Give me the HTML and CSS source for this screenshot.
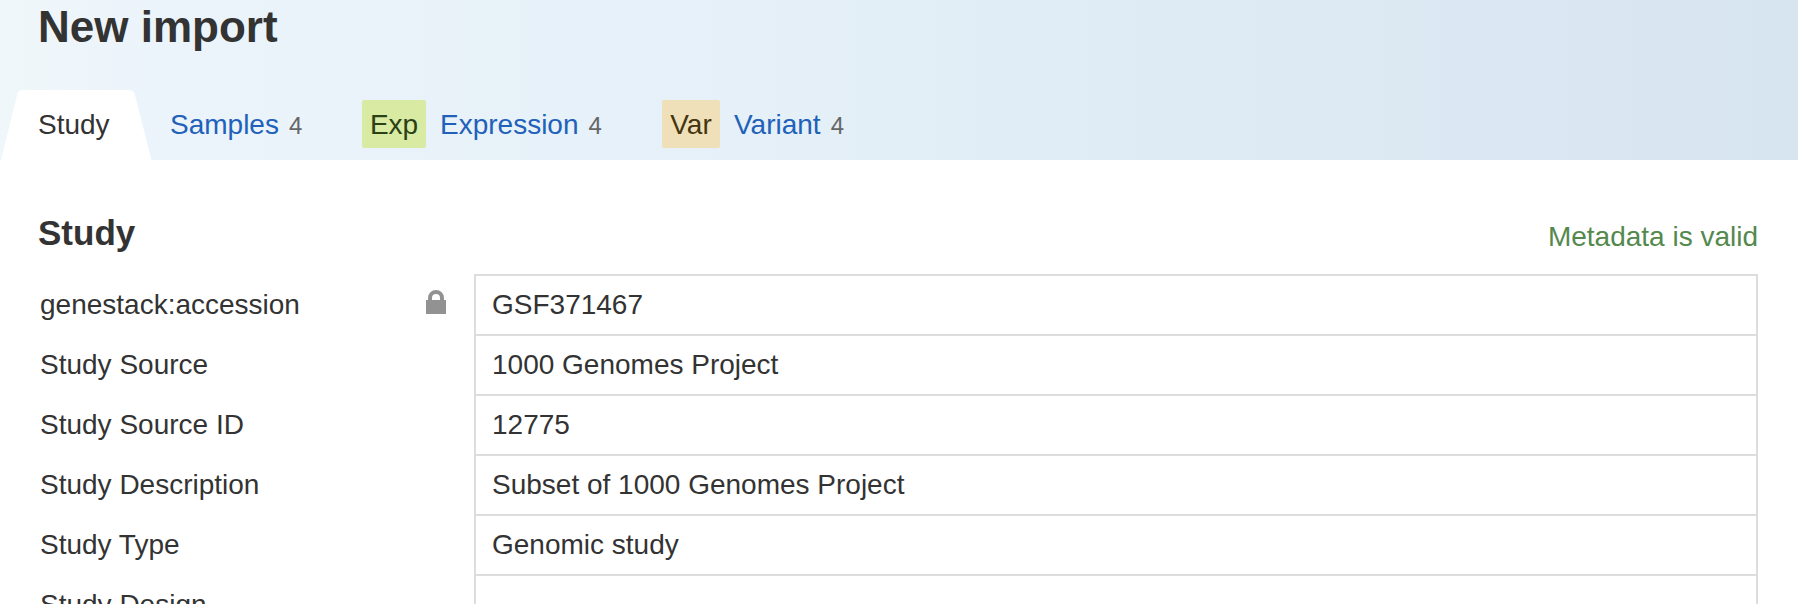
FILE: index.html
```
<!DOCTYPE html>
<html lang="en">
<head>
<meta charset="utf-8">
<title>New import</title>
<link rel="stylesheet" href="styles.css">
</head>
<body>
<header class="header">
  <h1 class="title">New import</h1>
  <nav class="tabs">
    <a class="tab tab-active">
      <svg class="tab-shape" width="153" height="70" viewBox="0 0 153 70"><path d="M1 70L17.300 4Q18.500 0 23 0H129Q133.500 0 134.700 4L151.500 70Z" fill="#fff"/></svg>
      <span class="tab-label">Study</span>
    </a>
    <a class="tab tab-samples"><span class="link">Samples</span><span class="count">4</span></a>
    <a class="tab tab-expression"><span class="badge badge-exp">Exp</span><span class="link">Expression</span><span class="count">4</span></a>
    <a class="tab"><span class="badge badge-var">Var</span><span class="link">Variant</span><span class="count">4</span></a>
  </nav>
</header>
<main class="content">
  <div class="heading">
    <h2 class="subtitle">Study</h2>
    <span class="status">Metadata is valid</span>
  </div>
  <div class="form">
    <div class="row">
      <div class="label"><span>genestack:accession</span>
        <svg class="lock" width="20" height="24" viewBox="0 0 20 24"><path d="M4 11V8a6 6 0 0 1 12 0v3" fill="none" stroke="#929292" stroke-width="4"/><path d="M0 10H20V24H0Z" fill="#929292"/></svg>
      </div>
      <div class="value">GSF371467</div>
    </div>
    <div class="row"><div class="label">Study Source</div><div class="value">1000 Genomes Project</div></div>
    <div class="row"><div class="label">Study Source ID</div><div class="value">12775</div></div>
    <div class="row"><div class="label">Study Description</div><div class="value">Subset of 1000 Genomes Project</div></div>
    <div class="row"><div class="label">Study Type</div><div class="value">Genomic study</div></div>
    <div class="row"><div class="label">Study Design</div><div class="value"></div></div>
  </div>
</main>
</body>
</html>
```
FILE: styles.css
```
* { box-sizing: border-box; }
body {
  margin: 0;
  height: 604px;
  overflow: hidden;
  background: #fff;
  color: #333;
  font: 28px/32px "Liberation Sans", Arial, sans-serif;
}
.header {
  display: flex;
  flex-direction: column;
  justify-content: space-between;
  height: 160px;
  background: linear-gradient(90deg, #eff7fa 0, #ecf4fb 150px, #e5f0f8 760px, #deebf4 1200px, #d7e5f1 100%);
}
.title {
  margin: 0;
  padding: 1px 0 0 38px;
  font-size: 44px;
  line-height: 52px;
}
.tabs { display: flex; height: 70px; }
.tab { display: flex; align-items: center; white-space: nowrap; }
.tab-active { position: relative; width: 152px; padding-left: 38px; }
.tab-shape { position: absolute; left: 0; top: 0; }
.tab-label { position: relative; }
.tab-samples { width: 210px; padding-left: 18px; }
.tab-expression { width: 300px; }
.link { color: #2161b9; }
.count { margin-left: 10px; padding-top: 2px; color: #666; font-size: 24px; }
.badge {
  display: flex;
  align-items: center;
  justify-content: center;
  height: 48px;
  margin: -2px 14px 0 0;
  padding-top: 2px;
  border-radius: 2px;
}
.badge-exp { width: 64px; background: #d9eaa2; color: #2a4015; }
.badge-var { width: 58px; background: #f0e0b9; color: #44350f; }
.content { padding: 0 40px; }
.heading {
  display: flex;
  justify-content: space-between;
  height: 114px;
  margin-left: -2px;
}
.subtitle { margin: 0; padding-top: 53px; font-size: 35px; line-height: 40px; }
.status { padding-top: 61px; color: #54894e; }
.row { display: flex; height: 60px; }
.label {
  display: flex;
  align-items: center;
  justify-content: space-between;
  width: 434px;
  padding: 2px 28px 0 0;
}
.lock { margin-top: -6px; }
.value {
  display: flex;
  flex: 1;
  align-items: center;
  padding-left: 16px;
  border: 2px solid #ddd;
  border-bottom: 0;
}
```
